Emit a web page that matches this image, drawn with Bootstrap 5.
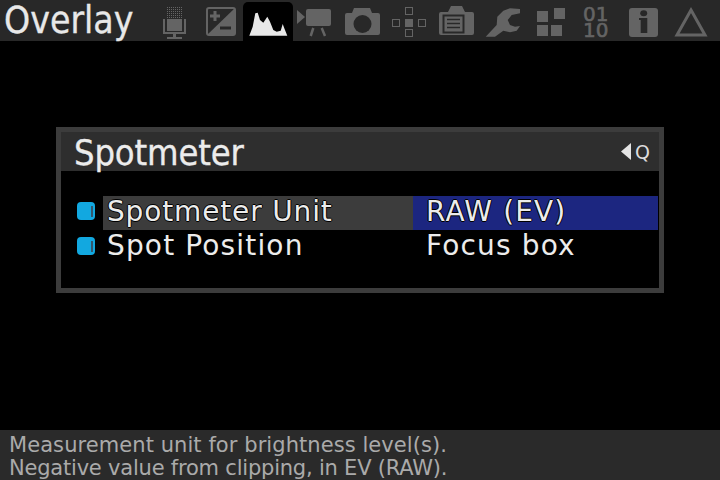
<!DOCTYPE html>
<html lang="en">
<head>
  <meta charset="UTF-8" />
  <meta name="viewport" content="width=device-width, initial-scale=1" />
  <title>Overlay - Spotmeter</title>
  <link href="https://cdn.jsdelivr.net/npm/bootstrap@5.3.3/dist/css/bootstrap.min.css" rel="stylesheet" />
  <style>
    body {
      width: 720px;
      height: 480px;
      overflow: hidden;
      background-color: #000;
      color: #ececec;
      font-family: "DejaVu Sans", sans-serif;
    }

    .top-bar {
      height: 41px;
      background-color: #282828;
    }

    .top-title {
      width: 151px;
      padding-left: 4px;
      font-family: "DejaVu Sans Condensed", "DejaVu Sans", sans-serif;
      font-size: 37px;
      line-height: 41px;
      color: #e8e8e8;
      -webkit-text-stroke: .3px #e8e8e8;
    }

    .tab-cell {
      width: 47px;
      height: 41px;
      flex: none;
    }

    .tab-cell svg {
      display: block;
      width: 47px;
      height: 42px;
      flex: none;
      fill: #646464;
    }

    .tab-active {
      width: 50px;
      margin-left: -2px;
      margin-right: -1px;
      margin-top: 2px;
      height: 39px;
      background-color: #000;
      border-radius: 5px 5px 0 0;
    }

    .tab-active svg {
      margin-top: -2px;
      fill: #e8e8e8;
    }

    .bit-icon {
      padding: 6px 0 0 9px;
      font-size: 20px;
      line-height: 16px;
      color: #646464;
      -webkit-text-stroke: .6px #646464;
    }

    .spot-panel {
      width: 608px;
      height: 166px;
      margin: 86px 0 0 56px;
      border: 5px solid #3c3c3c;
    }

    .panel-head {
      height: 39px;
      padding: 0 9px 0 13px;
      background-color: #2e2e2e;
    }

    .panel-title {
      padding-top: 2px;
      font-family: "DejaVu Sans Condensed", "DejaVu Sans", sans-serif;
      font-size: 36px;
      line-height: 39px;
      letter-spacing: -.15px;
      color: #ececec;
      -webkit-text-stroke: .3px #ececec;
    }

    .back-q {
      font-size: 19px;
      line-height: 20px;
      color: #ddd;
    }

    .panel-rows {
      padding: 25px 1px 0 16px;
    }

    .menu-row {
      height: 34px;
      margin-bottom: 1px;
      font-size: 28px;
      line-height: 32px;
      letter-spacing: 1.15px;
    }

    .menu-row + .menu-row {
      line-height: 30px;
    }

    .menu-dot {
      width: 18px;
      height: 18px;
      margin-top: 6px;
      margin-right: 8px;
      padding-right: 2px;
      background-color: #12a8e0;
      border-radius: 4px;
    }

    .menu-dot span {
      width: 2px;
      height: 11px;
      background-color: #33566c;
    }

    .menu-name {
      width: 310px;
      padding-left: 4px;
    }

    .menu-value {
      width: 245px;
      padding-left: 13px;
    }

    .row-selected .menu-name {
      background-color: #3c3c3c;
      letter-spacing: .85px;
    }

    .row-selected .menu-value {
      background-color: #1c2680;
    }

    .row-selected .menu-name,
    .row-selected .menu-value {
      text-shadow: 1px 0 #000, -1px 0 #000, 0 1px #000, 0 -1px #000;
    }

    .help-bar {
      height: 50px;
      margin-top: 137px;
      padding: 4px 0 0 9px;
      background-color: #2a2a2a;
      color: #aaa;
      font-size: 21px;
      line-height: 23px;
    }

    .help-first {
      letter-spacing: .07px;
    }

    .help-second {
      letter-spacing: -.21px;
    }
  </style>
</head>
<body>

  <!-- Tabs -->
  <div class="top-bar d-flex">
    <div class="top-title">Overlay</div>

    <div class="tab-cell">
      <svg viewBox="0 0 47 42">
        <rect x="16" y="19" width="15" height="12" />
        <path d="M16 7.5H31M16 9.5H31M16 11.5H31M16 13.5H31M16 15.5H31M16 17.5H31" fill="none" stroke="#646464" stroke-dasharray="1 1" />
        <path d="M13 19V33H34V19" fill="none" stroke="#646464" stroke-width="2" />
        <rect x="22" y="33" width="3" height="4" />
        <rect x="16" y="37" width="15" height="2" />
      </svg>
    </div>
    <div class="tab-cell">
      <svg viewBox="0 0 47 42">
        <rect x="9" y="8" width="28" height="27" rx="2" fill="none" stroke="#646464" stroke-width="2" />
        <polygon points="37,8 37,35 9,35" />
        <path d="M12 14.5H22V17.5H12ZM15.5 11H18.5V21H15.5Z" />
        <rect x="22" y="26.5" width="11" height="3" fill="#282828" />
      </svg>
    </div>
    <div class="tab-cell tab-active d-flex justify-content-center">
      <svg viewBox="0 0 47 42">
        <polygon points="4.3,35.7 7.7,26.7 10.3,13.3 12.7,12.7 15,20 18.3,22.7 22.3,16.7 25,21.7 28.3,30 31.7,31.7 35.7,30.7 37.7,24 39.3,28.3 42.3,35.7" />
      </svg>
    </div>
    <div class="tab-cell">
      <svg viewBox="0 0 47 42">
        <polygon points="5,10 13,17 5,24" />
        <rect x="14" y="9" width="25" height="17" rx="2" />
        <path d="M21.3 28 18.7 36M29.7 28 33 36" fill="none" stroke="#646464" stroke-width="2.5" />
      </svg>
    </div>
    <div class="tab-cell">
      <svg viewBox="0 0 47 42">
        <path d="M13 13 15 8H31L33 13H39Q41 13 41 15V33Q41 35 39 35H8Q6 35 6 33V15Q6 13 8 13Z" />
        <circle cx="23.5" cy="24" r="9" fill="#282828" />
      </svg>
    </div>
    <div class="tab-cell">
      <svg viewBox="0 0 47 42">
        <g fill="none" stroke="#646464">
          <rect x="19.5" y="7.5" width="7" height="7" />
          <rect x="6.5" y="19.5" width="7" height="7" />
          <rect x="32.5" y="19.5" width="7" height="7" />
          <rect x="19.5" y="29.5" width="7" height="7" />
        </g>
        <rect x="19" y="19" width="8" height="8" />
      </svg>
    </div>
    <div class="tab-cell">
      <svg viewBox="0 0 47 42">
        <path d="M15 12 18 6H29L32 12H39Q41 12 41 14V33Q41 35 39 35H8Q6 35 6 33V14Q6 12 8 12Z" />
        <rect x="10.5" y="15.5" width="20" height="17" fill="none" stroke="#282828" stroke-width="2" />
        <path d="M14 19.5H27M14 23.5H27M14 27.5H27" stroke="#282828" stroke-width="1.5" />
      </svg>
    </div>
    <div class="tab-cell">
      <svg viewBox="0 0 47 42">
        <polygon points="5.7,36.7 16.7,25 17.3,16.7 23.3,10.7 30,8.3 40,9 40,13.3 31.7,15 27.7,20 30,25 35,26.7 40,26 36.7,30.7 30,32.3 23.3,30.7 15,36.7" />
      </svg>
    </div>
    <div class="tab-cell">
      <svg viewBox="0 0 47 42">
        <rect x="10" y="11" width="11" height="11" />
        <rect x="27" y="8" width="11" height="11" />
        <rect x="10" y="25" width="11" height="11" />
        <rect x="24" y="25" width="11" height="11" />
      </svg>
    </div>
    <div class="tab-cell bit-icon d-flex flex-column">
      <span>01</span>
      <span>10</span>
    </div>
    <div class="tab-cell">
      <svg viewBox="0 0 47 42">
        <rect x="8" y="8" width="29" height="29" rx="3" />
        <ellipse cx="22.7" cy="13.3" rx="3.5" ry="3" fill="#282828" />
        <path d="M18 18H26.3V33H19.7V20H18Z" fill="#282828" />
      </svg>
    </div>
    <div class="tab-cell">
      <svg viewBox="0 0 47 42">
        <polygon points="23,10 37,35 9,35" fill="none" stroke="#646464" stroke-width="3" />
      </svg>
    </div>
  </div>

  <!-- Spotmeter submenu -->
  <div class="spot-panel">
    <div class="panel-head d-flex justify-content-between align-items-center">
      <div class="panel-title">Spotmeter</div>
      <div class="back-q d-flex align-items-center gap-1">
        <svg width="10" height="17" viewBox="0 0 10 17"><polygon points="10,0 10,17 0,8.5" fill="#e4e4e4" /></svg>
        <span>Q</span>
      </div>
    </div>
    <div class="panel-rows">
      <div class="menu-row row-selected d-flex align-items-stretch">
        <div class="menu-dot d-flex align-self-start align-items-center justify-content-end"><span></span></div>
        <div class="menu-name">Spotmeter Unit</div>
        <div class="menu-value">RAW (EV)</div>
      </div>
      <div class="menu-row d-flex align-items-stretch">
        <div class="menu-dot d-flex align-self-start align-items-center justify-content-end"><span></span></div>
        <div class="menu-name">Spot Position</div>
        <div class="menu-value">Focus box</div>
      </div>
    </div>
  </div>

  <!-- Help text -->
  <div class="help-bar">
    <div class="help-first">Measurement unit for brightness level(s).</div>
    <div class="help-second">Negative value from clipping, in EV (RAW).</div>
  </div>

</body>
</html>
